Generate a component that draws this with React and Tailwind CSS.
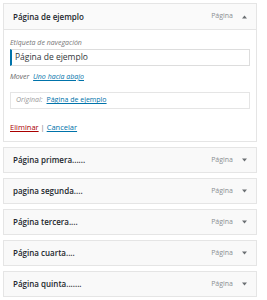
import React from 'react';

const items = ['Página primera......', 'pagina segunda....', 'Página tercera....', 'Página cuarta....', 'Página quinta.......'];

const Arrow = ({ up }) => (
  <svg width="5" height="4" viewBox="0 0 5 4" className="ml-[9px] mr-[1px]">
    {up ? <path d="M0 3.5 L2.5 0.5 L5 3.5 Z" fill="#6b6f73" /> : <path d="M0 0.5 L2.5 3.5 L5 0.5 Z" fill="#6b6f73" />}
  </svg>
);

const ItemHeader = ({ title, up, h }) => (
  <div className={`flex ${h} items-center pl-[9px] pr-[8px]`}>
    <span className="flex-1 text-[8px] font-semibold text-[#23282d]">{title}</span>
    <span className="text-[7px] text-[#8a8e92]">Página</span>
    <Arrow up={up} />
  </div>
);

const App = () => {
  return (
    <div className="w-[267px] h-[300px] bg-white pl-[3px] pt-[3px] pr-[10px]" style={{ fontFamily: '"Open Sans", sans-serif' }}>
      <div className="border border-[#e5e5e5] bg-white">
        <div className="border-b border-[#e5e5e5] bg-[#fafafa]">
          <ItemHeader title="Página de ejemplo" up h="h-[25px]" />
        </div>
        <div className="px-[6px] pt-[8px] pb-[9px]">
          <div className="text-[7px] italic text-[#777] leading-[10px]">Etiqueta de navegación</div>
          <div className="mt-[1px] h-[17px] border border-[#ddd] border-l-[2px] border-l-[#0073aa] flex items-center pl-[3px] text-[8.5px] text-[#32373c]">
            Página de ejemplo
          </div>
          <div className="mt-[6px] text-[7px] leading-[10px] italic text-[#666]">
            Mover <span className="ml-[2px] text-[#0073aa] underline">Uno hacia abajo</span>
          </div>
          <div className="mt-[10px] h-[17px] border border-[#e5e5e5] flex items-center pl-[5px] text-[7px]">
            <span className="italic text-[#999]">Original:</span>
            <span className="ml-[4px] text-[#0073aa] underline">Página de ejemplo</span>
          </div>
          <div className="mt-[13px] text-[7.5px] leading-[10px]">
            <span className="text-[#a00] underline">Eliminar</span>
            <span className="text-[#72777c]"> | </span>
            <span className="text-[#0073aa] underline">Cancelar</span>
          </div>
        </div>
      </div>
      <div className="mt-[5px] flex flex-col gap-[5px]">
        {items.map((t) => (
          <div key={t} className="border border-[#e5e5e5] bg-[#f9f9f9]">
            <ItemHeader title={t} h="h-[24px]" />
          </div>
        ))}
      </div>
    </div>
  );
};

export default App;
